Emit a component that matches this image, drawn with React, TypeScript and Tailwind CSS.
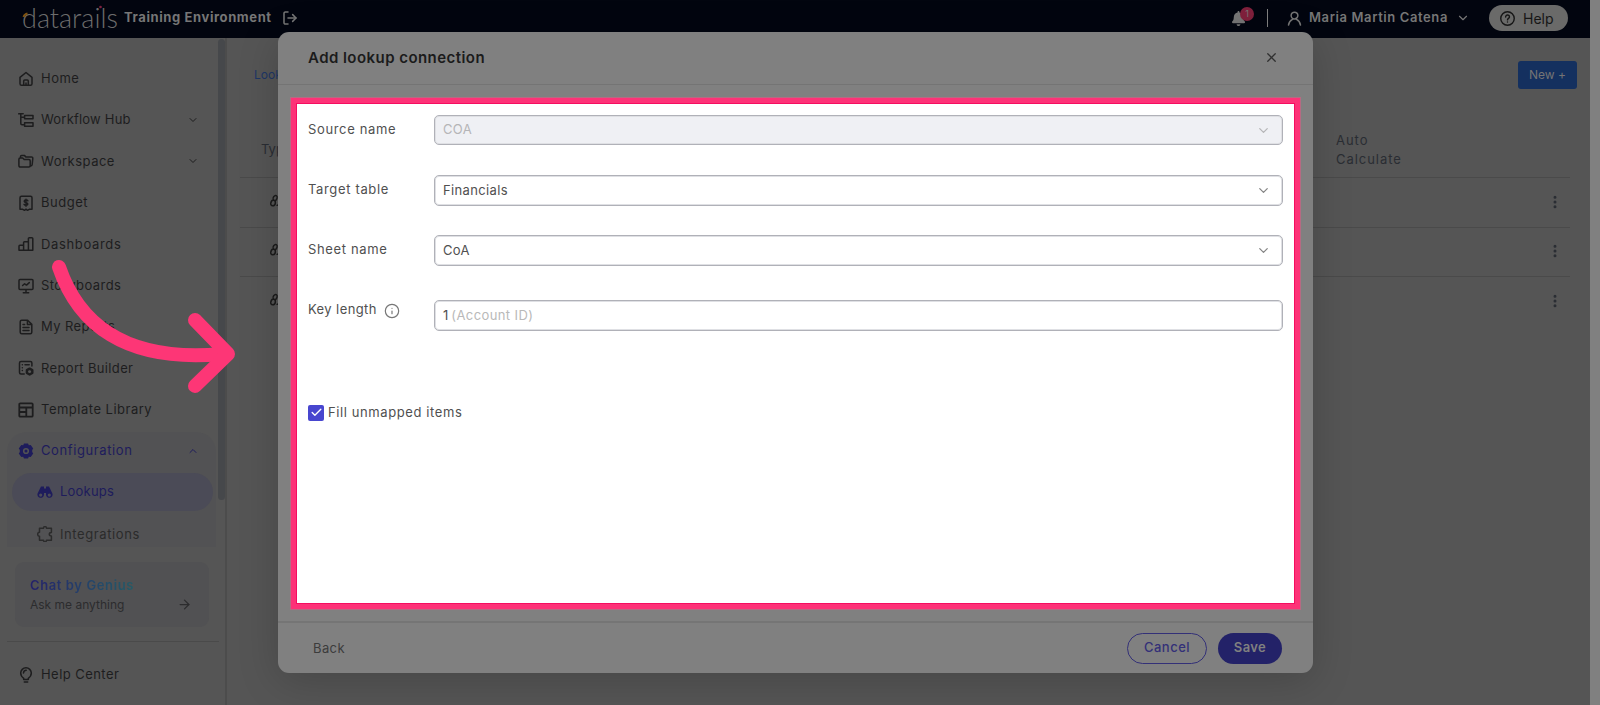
import type { ReactNode } from 'react';
import { ArrowRight, Check, ChevronDown, ChevronUp, EllipsisVertical, Info, LogOut, X } from 'lucide-react';
import { FaBell } from 'react-icons/fa';

type IconProps = {
  children: ReactNode;
  className?: string;
}

const Icon = ({ children, className = 'size-4' }: IconProps) => {
  return (
    <svg
      viewBox="0 0 16 16"
      fill="none"
      stroke="currentColor"
      strokeWidth="1.5"
      strokeLinecap="round"
      strokeLinejoin="round"
      className={`shrink-0 ${className}`}
    >
      {children}
    </svg>
  );
};

type NavItem = {
  label: string;
  tracking: string;
  icon: ReactNode;
  expandable?: boolean;
}

const navItems: NavItem[] = [
  {
    label: 'Home',
    tracking: 'tracking-[0.5px]',
    icon: <path d="M2 6.3 8 1.5l6 4.8v6.4c0 1-.6 1.6-1.6 1.6H3.6C2.6 14.3 2 13.7 2 12.7zM5.7 14V10a1 1 0 0 1 1-1h2.6a1 1 0 0 1 1 1v4M8 12v2" />,
  },
  {
    label: 'Workflow Hub',
    tracking: 'tracking-[0.2px]',
    expandable: true,
    icon: <path d="M.7 1.8h4.5M2.8 1.8v9.7c0 .8.4 1.2 1.2 1.2h2.5M2.8 5.300h3.700M6.600 3.400h8.400v3.400H6.600zM6.600 10.800h8.400v3.400H6.600z" />,
  },
  {
    label: 'Workspace',
    tracking: 'tracking-[0.5px]',
    expandable: true,
    icon: <path d="M.9 12.500V6.200c0-.8.4-1.200 1.200-1.200h2.600l1.500 1.500h4.800c.8 0 1.200.4 1.200 1.200v4.800c0 1-.5 1.500-1.400 1.500H2.300c-.9 0-1.400-.5-1.400-1.500zM2.500 4.700V3.600c0-.8.4-1.200 1.200-1.200h2.600l1.500 1.500h5.600c.9 0 1.500.5 1.400 1.400l-.6 6.200c-.1.800-.8 1.400-1.500 1.600" />,
  },
  {
    label: 'Budget',
    tracking: 'tracking-[0.5px]',
    icon: <path d="M2 14.300V2.700c0-.9.6-1.500 1.500-1.500h9c.9 0 1.500.6 1.500 1.500v11.600H11.200L9.500 15.300 8 14.200l-1.500 1.100-1.700-1zM9.800 5.800C9.400 4.700 6.300 4.600 6.200 6.300c0 1.800 3.600.9 3.600 2.600 0 1.600-3.100 1.500-3.700.4M8 4.200v7" />,
  },
  {
    label: 'Dashboards',
    tracking: 'tracking-[0.65px]',
    icon: <path d="M1 14V10.200c0-.6.3-.9.9-.9h3.400M5.600 14V6.600c0-.6.3-.9.9-.9h3.700M10.400 14V2.600c0-.6.3-.9.9-.9h2.600c.6 0 .9.3.9.9v11.600H1V14" />,
  },
  {
    label: 'Storyboards',
    tracking: 'tracking-[0.45px]',
    icon: <path d="M2 1.400h12c.6 0 1 .4 1 1v8c0 .6-.4 1-1 1H2c-.6 0-1-.4-1-1v-8c0-.6.4-1 1-1zM8 11.400v3M5.300 14.800h5.400M4.600 7.500l2-1.700 1.900 1.300 2.800-2.500" />,
  },
  {
    label: 'My Reports',
    tracking: 'tracking-[0.4px]',
    icon: <path d="M9.600 1.200H3.700c-.9 0-1.500.6-1.500 1.500v10.600c0 .9.6 1.500 1.500 1.500h8.600c.9 0 1.500-.6 1.500-1.500V5.400zM9.400 1.400v4.200h4.200M5 5.600h1.600M5 8.500h6M5 11.400h6" />,
  },
  {
    label: 'Report Builder',
    tracking: 'tracking-[0.35px]',
    icon: (
      <>
        <path d="M6.200 14H3c-.9 0-1.500-.6-1.500-1.500V3c0-.9.6-1.500 1.500-1.500h9.400c.9 0 1.500.6 1.500 1.500v3M4.300 4.800h.1M7 4.800h4.200M4.300 7.700h.1M4.300 10.600h.1" />
        <path strokeWidth="2.4" d="m11.600 8.600 2.700 1.500v2.900l-2.700 1.500-2.700-1.500v-2.900z" />
      </>
    ),
  },
  {
    label: 'Template Library',
    tracking: 'tracking-[0.5px]',
    icon: <path strokeWidth="1.8" d="M2.300 1.300h11.400c.6 0 1 .4 1 1v11.400c0 .6-.4 1-1 1H2.300c-.6 0-1-.4-1-1V2.300c0-.6.4-1 1-1zM1.300 5.500h13.400M8.300 5.800v8.700M1.300 10h7" />,
  },
];

const Sidebar = () => {
  return (
    <aside className="relative flex w-[227px] shrink-0 flex-col border-r-2 border-[#4c4c4c] pl-[7px] pt-5 text-[13px] text-[#1d1d1e]">
      <nav>
        {navItems.map((item) => (
          <div key={item.label} className="flex h-[41.4px] w-[209px] items-center pl-[11px] pr-[17px]">
            <Icon>{item.icon}</Icon>
            <span className={`ml-[7px] flex-1 whitespace-nowrap ${item.tracking}`}>{item.label}</span>
            {item.expandable && <ChevronDown className="size-3" strokeWidth={2} />}
          </div>
        ))}
        <div className="mt-[1.4px] h-[115px] w-[209px] rounded-t-[20px] bg-[#525254] text-[#1e1c5c]">
          <div className="flex h-[38px] items-center pl-[11px] pr-[17px]">
            <svg viewBox="0 0 16 16" className="size-4 shrink-0" fill="currentColor">
              <path fillRule="evenodd" d="m6 .5h4l.8 1.7 1.9-.2 2.5 3.5L14.200 7v2l1 1.500-2.500 3.500-1.900-.2-.8 1.700H6l-.8-1.700-1.900.2L.8 10.500l1-1.500V7l-1-1.500L3.300 2l1.900.2zM8 4.900a3.100 3.100 0 1 0 0 6.200 3.100 3.100 0 0 0 0-6.200zm0 1.600a1.500 1.500 0 1 1 0 3 1.500 1.500 0 0 1 0-3z" />
            </svg>
            <span className="ml-[7px] flex-1 tracking-[0.6px]">Configuration</span>
            <ChevronUp className="size-3" strokeWidth={2} />
          </div>
          <div className="ml-[5px] mt-[3px] flex h-[38px] w-[201px] items-center rounded-full bg-[#4b4b57] pl-[25px]">
            <svg viewBox="0 0 16 16" className="size-4 shrink-0" fill="currentColor">
              <path fillRule="evenodd" d="M4 2.500h3v2h2v-2h3l1 2 2.400 5A3.300 3.300 0 1 1 9 11V9H7v2A3.300 3.300 0 1 1 .6 9.500L3 4.500zM3.700 9.500a1.600 1.600 0 1 0 0 3.200 1.600 1.600 0 0 0 0-3.200zm8.600 0a1.600 1.600 0 1 0 0 3.200 1.600 1.600 0 0 0 0-3.200z" />
            </svg>
            <span className="ml-[7px] tracking-[0.2px]">Lookups</span>
          </div>
          <div className="flex h-[36px] items-center pl-[30px] pt-[11px] text-[#2b2b2b]">
            <Icon>
              <path d="M3.500 2.200h3c0-1 .6-1.600 1.500-1.600s1.500.6 1.500 1.600h4.900V6.500c-1.600 0-2.100.8-2.100 1.700s.5 1.700 2.100 1.700v4.300H9.500c0 1-.6 1.500-1.500 1.500s-1.500-.5-1.500-1.500h-4v-4C1.400 10.200.7 9.400.7 8.200s.7-1.900 1.800-1.900V2.200z" />
            </Icon>
            <span className="ml-[7px] tracking-[0.6px]">Integrations</span>
          </div>
        </div>
      </nav>
      <div className="ml-2 mt-[15px] h-[65px] w-[194px] rounded-[9px] bg-[#515153] px-[15px] pt-[13px]">
        <div className="w-fit bg-gradient-to-r from-[#24206a] to-[#245b67] bg-clip-text text-[13px]/5 font-semibold tracking-[0.6px] text-transparent">
          Chat by Genius
        </div>
        <div className="flex items-center justify-between text-[12px]/5 text-[#2c2c2e]">
          <span>Ask me anything</span>
          <ArrowRight className="mr-[2px] size-[15px]" />
        </div>
      </div>
      <div className="mt-[14px] w-[212px] border-t border-[#4a4a4a]" />
      <div className="mt-[23px] flex items-center pl-[11px]">
        <Icon>
          <path d="M5.700 11.300C3.500 9.800 2.700 8.300 2.700 6.100a5.300 5.300 0 0 1 10.600 0c0 2.200-.8 3.700-3 5.200v1.200H5.700zM6.300 15h3.400M8.200 3.200A3 3 0 0 0 5.500 6" />
        </Icon>
        <span className="ml-[7px] tracking-[0.45px]">Help Center</span>
      </div>
      <div className="absolute right-0 top-px h-[461px] w-[7px] rounded-full bg-[#46484b]" />
    </aside>
  );
};

const TopBar = () => {
  return (
    <header className="flex h-[38px] w-[1590px] items-center bg-[#02050f] pb-[2px] text-[#767676]">
      <div className="relative ml-[22px] w-[95px] font-['Lato'] text-[27px]/[34px] font-light text-[#6c6c6c]">
        datarails
        <svg viewBox="0 0 95 34" fill="none" className="absolute left-0 top-0 h-[34px] w-[95px]">
          <path d="M1.500 16c.6-1.800 2-3 4-3.400" stroke="#80520f" strokeWidth="2" />
          <circle cx="78.5" cy="6" r="1.3" fill="#802040" />
        </svg>
      </div>
      <span className="ml-[7px] w-[149px] whitespace-nowrap text-[13px] font-bold tracking-[0.6px]">Training Environment</span>
      <LogOut className="ml-[9px] size-4" strokeWidth={2.3} />
      <div className="relative ml-[933px]">
        <FaBell className="size-[15px]" />
        <span className="absolute -top-[4px] left-[9px] flex size-[14px] items-center justify-center rounded-full bg-[#80203c] text-[9px]">1</span>
      </div>
      <div className="ml-[21px] h-[18px] w-px bg-[#808080]" />
      <Icon className="ml-[19px] h-[15px] w-[15px]">
        <path strokeWidth="1.6" d="M8 1.200a3.600 3.600 0 1 1 0 7.200 3.600 3.600 0 0 1 0-7.200zM1.600 15c.4-3.200 2.500-5.200 4.300-6.100M14.400 15c-.4-3.200-2.500-5.200-4.300-6.100" />
      </Icon>
      <span className="ml-[7px] w-[139px] whitespace-nowrap text-[13px] font-semibold tracking-[0.6px]">Maria Martin Catena</span>
      <ChevronDown className="ml-2 size-[14px]" />
      <div className="ml-auto mr-[22px] flex h-[26px] w-[79px] items-center rounded-full bg-[#6a6a69] pl-[11px] text-[14px] text-[#161616]">
        <Icon className="h-[15px] w-[15px]">
          <circle cx="8" cy="8" r="7.2" />
          <path d="M6 6.400c0-2.900 4.200-2.600 4.100 0C10.100 7.800 8 8 8 9.500M8 11.700v.1" />
        </Icon>
        <span className="ml-2">Help</span>
      </div>
    </header>
  );
};

const LookupsPage = () => {
  return (
    <main className="w-[1363px] pl-[13px] pr-[20px] text-[13px]">
      <div className="flex h-[76px] items-start justify-between pl-[14px]">
        <span className="mt-[28px] text-[12px] text-[#1d3666]">Lookups</span>
        <button className="-mr-[7px] mt-[23px] h-[28px] w-[59px] rounded-[3px] bg-[#14305f] pb-px text-[12px] text-[#747474]">New +</button>
      </div>
      <div className="flex h-[64px] items-center justify-between border-b border-[#4a4a4a] pl-[21px] pt-[8px] text-[13px]/[19px] text-[#2a2d33]">
        <span>Type</span>
        <span className="mr-[161px] w-[73px] tracking-[0.95px]">Auto Calculate</span>
      </div>
      {[1, 2, 3].map((row) => (
        <div
          key={row}
          className="flex h-[49.5px] items-center justify-between border-b border-[#4a4a4a] pb-px pl-[29px] pr-[7px] text-[#1b1b1b] last:border-b-0"
        >
          <Icon className="-mt-[3px] h-[13px] w-[13px]">
            <path strokeWidth="1.8" d="M5.500 7.500C2 8 .5 14.500 4.500 14.500S9 8 5.500 7.500zM5.500 7.500C3.500 5 7 1 9 2s1 5-1.500 6.500M12 2c3 3 2 11-2 12" />
          </Icon>
          <EllipsisVertical className="size-4 text-[#2a2d33]" strokeWidth={2.5} />
        </div>
      ))}
    </main>
  );
};

type SelectFieldProps = {
  label: string;
  value: string;
  disabled?: boolean;
}

const SelectField = ({ label, value, disabled }: SelectFieldProps) => {
  return (
    <div className="flex h-[60px] items-start">
      <span className="mt-[5px] w-[126px] tracking-[0.65px]">{label}</span>
      <div
        className={`flex w-[849px] items-center justify-between rounded-[5px] border border-[#b0b1b8] pl-[8px] pr-[11px] shadow-[inset_0_0_0_1px_#dfe0e4] ${
          disabled ? 'h-[30px] bg-[#eff0f4] text-[#b5b5b7]' : 'h-[31px] bg-white'
        }`}
      >
        <span className="tracking-[0.35px]">{value}</span>
        <ChevronDown className={`size-[15px] ${disabled ? 'text-[#b5b5b7]' : 'text-[#858585]'}`} />
      </div>
    </div>
  );
};

const LookupDialog = () => {
  return (
    <section className="absolute left-[278px] top-[32px] flex h-[641px] w-[1035px] flex-col rounded-[11px] bg-[#808080] shadow-[0_8px_40px_rgba(0,0,0,0.18)]">
      <div className="flex h-[53px] items-center justify-between border-b border-[#747474] pl-[30px] pr-[34px]">
        <h2 className="text-[15px] font-semibold tracking-[0.45px] text-[#1b1b1b]">Add lookup connection</h2>
        <X className="-mt-[2px] size-[15px] text-[#303030]" />
      </div>
      <div className="flex-1 pl-[12px] pt-[12px]">
        <div className="h-[513px] w-[1011px] border border-[#b56b83] bg-[#fd3277] p-[5px]">
          <div className="h-[501px] border border-[#f50d60] bg-white pl-[11px] pt-[11px] text-[13px] text-[#505050]">
            <SelectField label="Source name" value="COA" disabled />
            <SelectField label="Target table" value="Financials" />
            <SelectField label="Sheet name" value="CoA" />
            <div className="flex h-[108px] items-start">
              <span className="mt-[5px] flex w-[126px] items-center gap-[7px] tracking-[0.4px]">
                Key length
                <Info className="mt-[2px] size-4 text-[#777]" strokeWidth={1.8} />
              </span>
              <div className="mt-[5px] flex h-[31px] w-[849px] items-center rounded-[5px] border border-[#b0b1b8] pl-[8px] shadow-[inset_0_0_0_1px_#dfe0e4]">
                <span>1</span>
                <span className="ml-[3px] tracking-[0.4px] text-[#b9b9b9]">(Account ID)</span>
              </div>
            </div>
            <div className="flex items-center">
              <span className="flex size-4 items-center justify-center rounded-[2px] bg-[#4846cf]">
                <Check className="size-[13px] text-white" strokeWidth={2.5} />
              </span>
              <span className="ml-1 tracking-[0.6px]">Fill unmapped items</span>
            </div>
          </div>
        </div>
      </div>
      <div className="flex h-[52px] items-center border-t-2 border-[#757575] pl-[35px] pr-[31px] pt-px text-[13px]">
        <span className="flex-1 tracking-[0.4px] text-[#3c3c3c]">Back</span>
        <button className="h-[31px] w-[80px] rounded-full border border-[#333078] pb-px font-medium tracking-[0.5px] text-[#333078]">Cancel</button>
        <button className="ml-[11px] h-[31px] w-[64px] rounded-full bg-[#232268] pb-px font-semibold tracking-[0.4px] text-[#808080]">Save</button>
      </div>
    </section>
  );
};

const App = () => {
  return (
    <div className="relative h-[705px] w-[1600px] overflow-hidden bg-[#808080] font-['Inter','Open_Sans',sans-serif]">
      <TopBar />
      <div className="flex h-[667px] w-[1590px] bg-[#555]">
        <Sidebar />
        <LookupsPage />
      </div>
      <LookupDialog />
      <svg viewBox="0 0 250 410" fill="none" className="absolute left-0 top-0 h-[410px] w-[250px]">
        <g stroke="#fd3676" strokeWidth="14" strokeLinecap="round" strokeLinejoin="round">
          <path d="M59 267C78 323 124 363 222 354" />
          <path d="m195 320 33 34-33 32" />
        </g>
      </svg>
    </div>
  );
};

export default App;
